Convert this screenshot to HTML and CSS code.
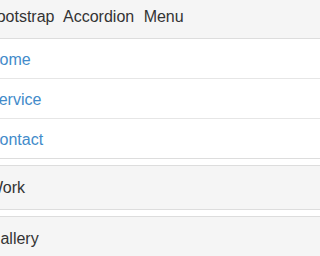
FILE: index.html
```html
<!DOCTYPE html>
<html>
<head>
<meta charset="utf-8">
<link rel="stylesheet" href="styles.css">
</head>
<body>
<div class="viewport">
  <div class="accordion">
    <div class="panel">
      <div class="panel-heading main-title">Bootstrap Accordion Menu</div>
      <ul class="menu">
        <li><a href="#">Home</a></li>
        <li><a href="#">Service</a></li>
        <li><a href="#">Contact</a></li>
      </ul>
    </div>
    <div class="panel">
      <div class="panel-heading">Work</div>
    </div>
    <div class="panel">
      <div class="panel-heading">Gallery</div>
    </div>
  </div>
</div>
</body>
</html>
```
FILE: styles.css
```css
html, body {
  margin: 0;
  padding: 0;
  background: #fff;
  overflow: hidden;
}
body {
  font-family: "Liberation Sans", Arial, sans-serif;
  color: #333;
}
.viewport {
  width: 100%;
  height: 100vh;
  overflow: hidden;
}
.accordion {
  margin: -6px 0 0 -28px;
  width: calc(100% + 60px);
}
.panel {
  border: 1px solid #ddd;
  border-radius: 4px;
  background: #fff;
  overflow: hidden;
}
.panel + .panel {
  margin-top: 6px;
}
.panel-heading {
  background: #f5f5f5;
  padding: 10px 15px;
  font-size: 16px;
  line-height: 23px;
  color: #333;
}
.main-title {
  border-bottom: 1px solid #ddd;
  padding-left: 13px;
  word-spacing: 5px;
}
.menu {
  list-style: none;
  margin: 0;
  padding: 0;
}
.menu li {
  padding: 11px 15px 9px;
  font-size: 16px;
  line-height: 19px;
  border-bottom: 1px solid #e6e6e6;
}
.menu li:last-child {
  border-bottom: none;
}
.menu a {
  color: #428bca;
  text-decoration: none;
}
```
